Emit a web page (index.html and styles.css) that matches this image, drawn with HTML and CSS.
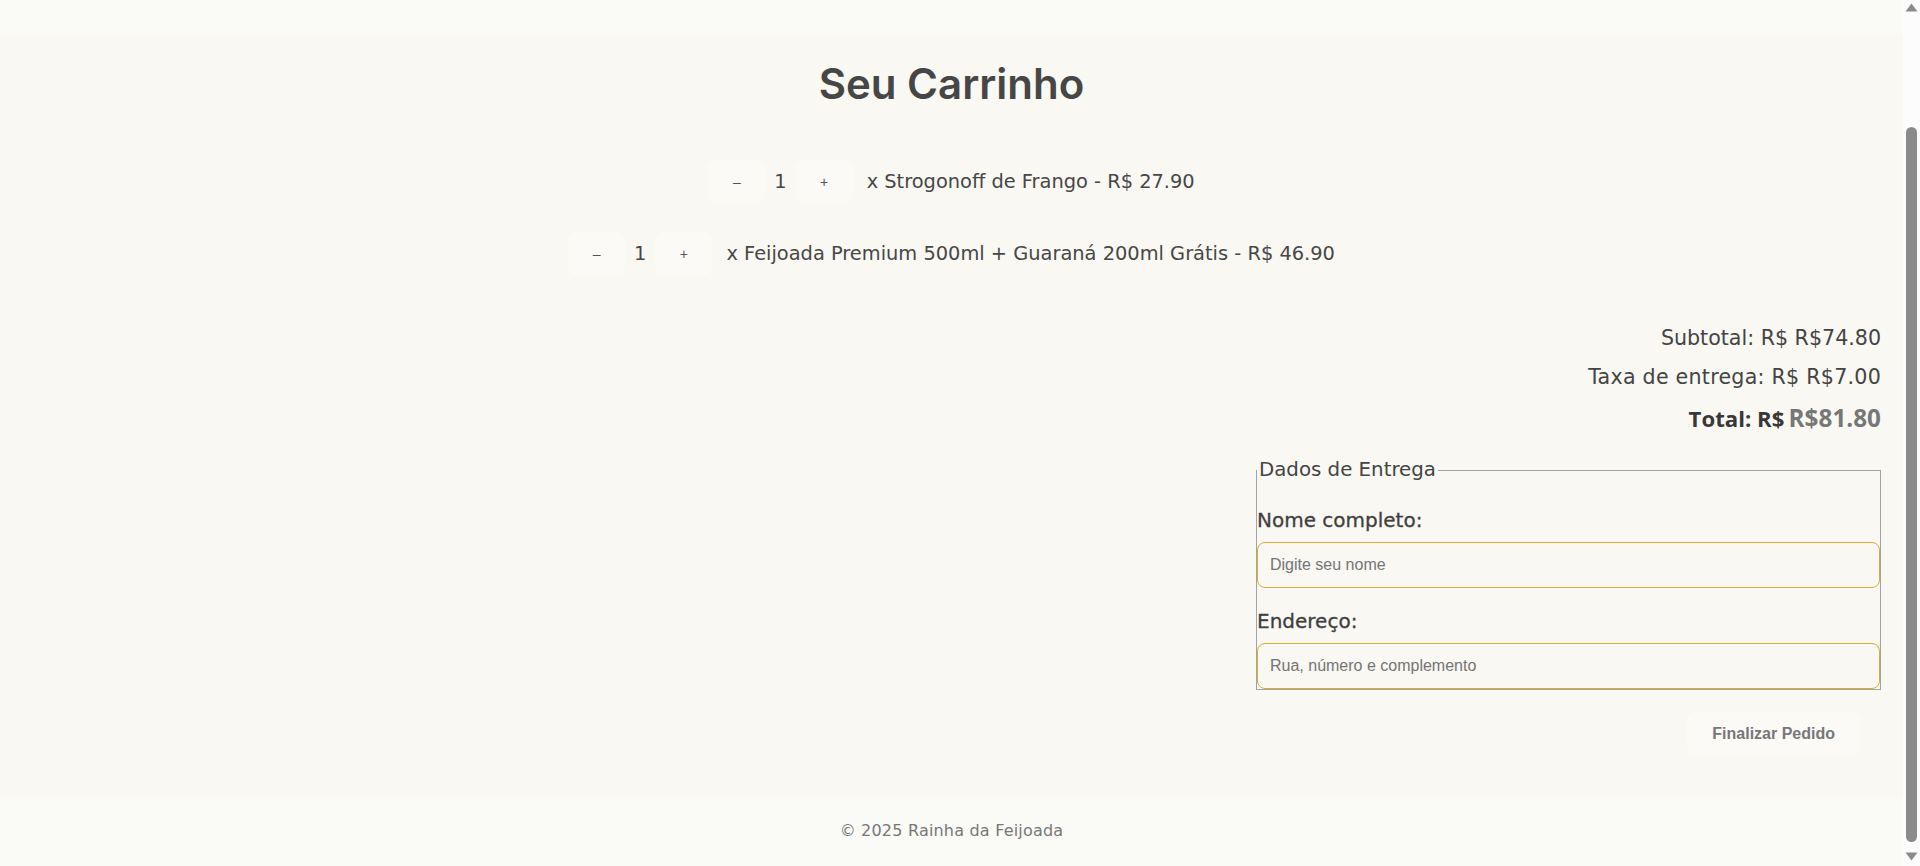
FILE: index.html
```html
<!DOCTYPE html>
<html lang="pt-BR">
<head>
<meta charset="utf-8">
<title>Seu Carrinho - Rainha da Feijoada</title>
<link rel="stylesheet" href="styles.css">
</head>
<body>
<div class="page">
  <header class="site-header"></header>
  <main class="cart-page">
    <h1 class="cart-title">Seu Carrinho</h1>
    <ul class="cart-list">
      <li class="cart-item">
        <button class="qty-btn" type="button">–</button>
        <span class="qty">1</span>
        <button class="qty-btn" type="button">+</button>
        <span class="item-desc">x Strogonoff de Frango - R$ 27.90</span>
      </li>
      <li class="cart-item">
        <button class="qty-btn" type="button">–</button>
        <span class="qty">1</span>
        <button class="qty-btn" type="button">+</button>
        <span class="item-desc">x Feijoada Premium 500ml + Guaraná 200ml Grátis - R$ 46.90</span>
      </li>
    </ul>
    <div class="summary">
      <p class="summary-line">Subtotal: R$ R$74.80</p>
      <p class="summary-line summary-line-fee">Taxa de entrega: R$ R$7.00</p>
      <p class="summary-total"><strong class="total-label">Total: R$</strong> <span class="total-value">R$81.80</span></p>
    </div>
    <form class="checkout">
      <fieldset class="delivery">
        <legend class="delivery-legend">Dados de Entrega</legend>
        <label class="field-label" for="nome">Nome completo:</label>
        <input class="field-input" id="nome" type="text" placeholder="Digite seu nome">
        <label class="field-label field-label-second" for="endereco">Endereço:</label>
        <input class="field-input" id="endereco" type="text" placeholder="Rua, número e complemento">
      </fieldset>
      <div class="actions">
        <button class="finalize-btn" type="button">Finalizar Pedido</button>
      </div>
    </form>
  </main>
  <footer class="site-footer">© 2025 Rainha da Feijoada</footer>
</div>
<div class="scrollbar" aria-hidden="true">
  <span class="sb-arrow">
    <svg width="17" height="17" viewBox="0 0 17 17"><polygon points="2.5,11.5 8.5,3.5 14.5,11.5" fill="#8b8b8b"/></svg>
  </span>
  <span class="sb-track"><span class="sb-thumb"></span></span>
  <span class="sb-arrow">
    <svg width="17" height="17" viewBox="0 0 17 17"><polygon points="2.5,3.5 14.5,3.5 8.5,11.5" fill="#8b8b8b"/></svg>
  </span>
</div>
</body>
</html>
```

FILE: styles.css
```css
* { box-sizing: border-box; }

html, body {
  margin: 0;
  padding: 0;
}

body {
  background: #fafaf6;
  color: #444444;
  font-family: "DejaVu Sans", "Open Sans", sans-serif;
}

.page {
  margin-right: 17px;
}

.site-header {
  height: 35px;
  background: #fafaf6;
}

.cart-page {
  background: #f9f8f3;
  padding: 0 22px 42px;
  display: flex;
  flex-direction: column;
}

.cart-title {
  margin: 25px 0 0;
  font-family: Inter, "DejaVu Sans", sans-serif;
  font-size: 42px;
  line-height: 48px;
  font-weight: 600;
  text-align: center;
  color: #464646;
}

.cart-list {
  list-style: none;
  margin: 52px 0 0;
  padding: 0;
  display: flex;
  flex-direction: column;
  gap: 29px;
}

.cart-item {
  display: flex;
  justify-content: center;
  align-items: center;
  height: 43px;
  font-size: 19.4px;
  color: #474747;
}

.qty-btn {
  height: 43px;
  min-width: 57px;
  padding: 0 22px;
  border: none;
  border-radius: 8px;
  background: #fbfaf7;
  color: #555555;
  font-family: "Liberation Sans", Arial, sans-serif;
  font-size: 14px;
}

.qty {
  margin: 0 9px;
  min-width: 12px;
  text-align: center;
}

.item-desc {
  margin-left: 14px;
}

.summary {
  margin-top: 44px;
  text-align: right;
}

.summary-line {
  margin: 0;
  font-size: 20.6px;
  line-height: 39px;
}

.summary-line-fee {
  letter-spacing: 0.25px;
}

.summary-total {
  margin: 0;
  font-family: "Open Sans", "DejaVu Sans", sans-serif;
  line-height: 41px;
}

.total-label {
  font-size: 22.2px;
  font-weight: 700;
  color: #383838;
}

.total-value {
  font-size: 24.3px;
  font-weight: 700;
  color: #777777;
}

.checkout {
  display: flex;
  flex-direction: column;
  align-items: flex-end;
  margin-top: 13px;
}

.delivery {
  width: 625px;
  margin: 0;
  padding: 0;
  border: 1px solid #a3a3a3;
  display: flex;
  flex-direction: column;
}

.delivery-legend {
  padding: 0 2px;
  font-size: 19.8px;
  line-height: 30px;
  color: #444444;
}

.field-label {
  display: block;
  margin-top: 21px;
  font-size: 20px;
  line-height: 28px;
  color: #3f3f3f;
  -webkit-text-stroke: 0.3px #3f3f3f;
}

.field-label-second {
  margin-top: 19px;
}

.field-input {
  display: block;
  width: 100%;
  height: 46px;
  margin-top: 8px;
  padding: 0 12px;
  border: 1px solid #d7ae3a;
  border-radius: 8px;
  background: transparent;
  font-family: "Liberation Sans", Arial, sans-serif;
  font-size: 16px;
  color: #333333;
}

.field-input::placeholder {
  color: #757575;
}

.actions {
  margin-top: 22px;
  margin-right: 21px;
}

.finalize-btn {
  height: 43px;
  padding: 0 25px;
  border: none;
  border-radius: 8px;
  background: #fbfaf7;
  color: #777777;
  font-family: "Liberation Sans", Arial, sans-serif;
  font-size: 16px;
  font-weight: 700;
}

.site-footer {
  height: 69px;
  padding-top: 22px;
  text-align: center;
  font-size: 16px;
  line-height: 24px;
  letter-spacing: 0.2px;
  color: #777777;
  background: #fafaf6;
}

.scrollbar {
  position: fixed;
  top: 0;
  right: 0;
  width: 17px;
  height: 100vh;
  background: #fcfcfc;
  display: flex;
  flex-direction: column;
}

.sb-arrow {
  display: block;
  height: 17px;
  flex: none;
}

.sb-arrow svg {
  display: block;
}

.sb-track {
  flex: 1;
  display: block;
  padding-top: 110px;
}

.sb-thumb {
  display: block;
  width: 11px;
  height: 715px;
  margin-left: 3px;
  border-radius: 6px;
  background: #8b8b8b;
}
```
